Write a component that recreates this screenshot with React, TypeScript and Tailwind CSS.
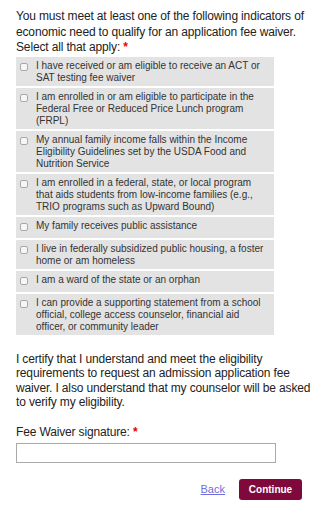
import React from "react";

const options: string[] = [
  "I have received or am eligible to receive an ACT or SAT testing fee waiver",
  "I am enrolled in or am eligible to participate in the Federal Free or Reduced Price Lunch program (FRPL)",
  "My annual family income falls within the Income Eligibility Guidelines set by the USDA Food and Nutrition Service",
  "I am enrolled in a federal, state, or local program that aids students from low-income families (e.g., TRIO programs such as Upward Bound)",
  "My family receives public assistance",
  "I live in federally subsidized public housing, a foster home or am homeless",
  "I am a ward of the state or an orphan",
  "I can provide a supporting statement from a school official, college access counselor, financial aid officer, or community leader",
];

const App: React.FC = () => {
  return (
    <div
      className="bg-white px-4 pt-[9px] pb-6 text-[#222] min-h-[526px]"
      style={{ fontFamily: '"Liberation Sans", Arial, sans-serif' }}
    >
      <p className="text-[12px] tracking-[-0.15px] leading-[15.5px]">
        You must meet at least one of the following indicators of economic need to qualify for an application fee waiver.
        Select all that apply: <span className="text-[#e00] font-bold leading-none">*</span>
      </p>

      <div className="mt-[1px] flex flex-col gap-[2px] w-[258px]">
        {options.map((text, i) => (
          <label key={i} className="flex items-start bg-[#e3e3e3] pt-[3px] pb-[2px] pr-2 min-h-[21px]">
            <span className="ml-[4px] mt-[3px] w-[8px] h-[8px] shrink-0 rounded-[2px] border border-[#a9a9a9] bg-[#f6f6f6]" />
            <span className="ml-[8px] text-[10px] leading-[12px] text-[#333]">{text}</span>
          </label>
        ))}
      </div>

      <p className="mt-[17px] text-[12px] tracking-[-0.15px] leading-[14.5px]">
        I certify that I understand and meet the eligibility requirements to request an admission application fee waiver.
        I also understand that my counselor will be asked to verify my eligibility.
      </p>

      <div className="mt-[15px]">
        <label className="block text-[12px] tracking-[-0.15px] leading-[14.5px]">
          Fee Waiver signature: <span className="text-[#e00] font-bold leading-none">*</span>
        </label>
        <input type="text" className="mt-[4px] block w-[260px] h-[20px] border border-[#aaa] bg-white" />
      </div>

      <div className="mt-[16px] flex items-center justify-end gap-[14px] pr-[13px]">
        <a href="#" className="text-[11px] text-[#6f6fdc] underline">
          Back
        </a>
        <button type="button" className="h-[21px] w-[63px] rounded-[3px] bg-[#80093c] text-white text-[10px] font-bold">
          Continue
        </button>
      </div>
    </div>
  );
};

export default App;
